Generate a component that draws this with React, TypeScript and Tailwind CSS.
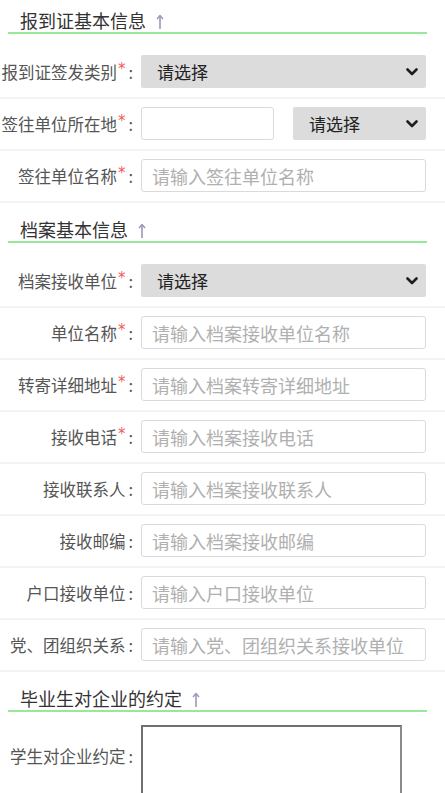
import React from "react";

const FONT = { fontFamily: '"Noto Sans CJK SC", "Noto Sans", sans-serif' };

function Chevron() {
  return (
    <svg width="12" height="8" viewBox="0 0 12 8" className="shrink-0">
      <path d="M1.5 1.5 L6 6 L10.5 1.5" fill="none" stroke="#1f1f1f" strokeWidth="2.6" strokeLinecap="round" strokeLinejoin="round" />
    </svg>
  );
}

function Arrow() {
  return (
    <svg width="8" height="16" viewBox="0 0 8 16" className="ml-[10px] mt-[4px] shrink-0">
      <path d="M4 15 L4 2" stroke="#9a98b8" strokeWidth="1.6" fill="none" />
      <path d="M1 5 L4 1.5 L7 5" stroke="#9a98b8" strokeWidth="1.4" fill="none" strokeLinejoin="round" />
    </svg>
  );
}

function Header({ title, first }: { title: string; first?: boolean }) {
  return (
    <div
      className={`ml-[8px] w-[419px] border-b-[2px] border-[#98e898] pl-[12px] ${first ? "pt-[8px]" : "pt-[14px]"} mb-[13px] flex items-center`}
    >
      <span className="text-[18px] leading-[24px] text-[#333]">{title}</span>
      <Arrow />
    </div>
  );
}

function Label({ text, req }: { text: string; req?: boolean }) {
  return (
    <div className="w-[141px] shrink-0 flex justify-end items-center pr-[8px] text-[16.5px] leading-[24px] text-[#555]">
      <span className="whitespace-nowrap">{text}</span>
      {req && (
        <span
          className="text-[#f25a5a] text-[15px] leading-[15px] self-start mt-[2px] ml-[1px]"
          style={{ fontFamily: '"DejaVu Sans", sans-serif' }}
        >
          *
        </span>
      )}
      <span className="ml-[3px]">:</span>
    </div>
  );
}

function Select({ w }: { w: string }) {
  return (
    <div className={`${w} h-[33px] bg-[#dcdcdc] rounded-[2px] flex items-center justify-between pl-[16px] pr-[8px]`}>
      <span className="text-[17px] text-[#222]">请选择</span>
      <Chevron />
    </div>
  );
}

function TextInput({ ph, w = "w-[285px]" }: { ph?: string; w?: string }) {
  return (
    <input
      className={`${w} h-[33px] border border-[#dadada] rounded-[3px] bg-white px-[10px] text-[18px] text-[#333] placeholder:text-[#b0b0b0] outline-none`}
      placeholder={ph}
      style={FONT}
    />
  );
}

function Row({ children }: { children: React.ReactNode }) {
  return <div className="flex items-center pt-[8px] pb-[9px] border-b-[2px] border-[#f3f3f3]">{children}</div>;
}

export default function App() {
  return (
    <div className="w-[445px] h-[793px] bg-white overflow-hidden" style={FONT}>
      <Header title="报到证基本信息" first />
      <Row>
        <Label text="报到证签发类别" req />
        <Select w="w-[285px]" />
      </Row>
      <Row>
        <Label text="签往单位所在地" req />
        <TextInput w="w-[133px]" />
        <div className="ml-[19px]">
          <Select w="w-[133px]" />
        </div>
      </Row>
      <Row>
        <Label text="签往单位名称" req />
        <TextInput ph="请输入签往单位名称" />
      </Row>

      <Header title="档案基本信息" />
      <Row>
        <Label text="档案接收单位" req />
        <Select w="w-[285px]" />
      </Row>
      <Row>
        <Label text="单位名称" req />
        <TextInput ph="请输入档案接收单位名称" />
      </Row>
      <Row>
        <Label text="转寄详细地址" req />
        <TextInput ph="请输入档案转寄详细地址" />
      </Row>
      <Row>
        <Label text="接收电话" req />
        <TextInput ph="请输入档案接收电话" />
      </Row>
      <Row>
        <Label text="接收联系人" />
        <TextInput ph="请输入档案接收联系人" />
      </Row>
      <Row>
        <Label text="接收邮编" />
        <TextInput ph="请输入档案接收邮编" />
      </Row>
      <Row>
        <Label text="户口接收单位" />
        <TextInput ph="请输入户口接收单位" />
      </Row>
      <Row>
        <Label text="党、团组织关系" />
        <TextInput ph="请输入党、团组织关系接收单位" />
      </Row>

      <Header title="毕业生对企业的约定" />
      <div className="flex items-start">
        <div className="pt-[19px]">
          <Label text="学生对企业约定" />
        </div>
        <textarea
          className="w-[261px] h-[90px] border-[2px] border-[#8a8a8a] border-t-[#707070] border-l-[#707070] bg-white resize-none outline-none"
          style={FONT}
        />
      </div>
    </div>
  );
}
